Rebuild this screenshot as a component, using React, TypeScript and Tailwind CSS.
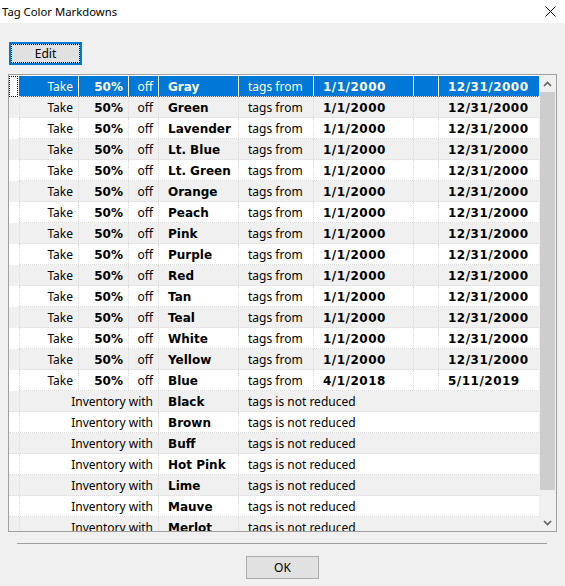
import React from "react";

type TakeRow = { color: string; from: string; to: string };

const takeRows: TakeRow[] = [
  { color: "Gray", from: "1/1/2000", to: "12/31/2000" },
  { color: "Green", from: "1/1/2000", to: "12/31/2000" },
  { color: "Lavender", from: "1/1/2000", to: "12/31/2000" },
  { color: "Lt. Blue", from: "1/1/2000", to: "12/31/2000" },
  { color: "Lt. Green", from: "1/1/2000", to: "12/31/2000" },
  { color: "Orange", from: "1/1/2000", to: "12/31/2000" },
  { color: "Peach", from: "1/1/2000", to: "12/31/2000" },
  { color: "Pink", from: "1/1/2000", to: "12/31/2000" },
  { color: "Purple", from: "1/1/2000", to: "12/31/2000" },
  { color: "Red", from: "1/1/2000", to: "12/31/2000" },
  { color: "Tan", from: "1/1/2000", to: "12/31/2000" },
  { color: "Teal", from: "1/1/2000", to: "12/31/2000" },
  { color: "White", from: "1/1/2000", to: "12/31/2000" },
  { color: "Yellow", from: "1/1/2000", to: "12/31/2000" },
  { color: "Blue", from: "4/1/2018", to: "5/11/2019" },
];

const untouched = ["Black", "Brown", "Buff", "Hot Pink", "Lime", "Mauve", "Merlot"];

const bold = "font-['DejaVu_Sans',sans-serif] font-bold text-[12px]";
const boldDate = "font-['DejaVu_Sans',sans-serif] font-bold text-[12px] tracking-[0.5px]";

function Take({ row, index }: { row: TakeRow; index: number }) {
  const selected = index === 0;
  const bg = selected ? "bg-[#0078d7] text-white" : index % 2 ? "bg-[#f0f0f0]" : "bg-white";
  const line = selected ? "border-l border-solid border-white" : "border-l border-dotted border-[#dcdcdc]";
  return (
    <div className={`flex h-[21px] shrink-0 ${index % 2 ? "bg-[#f0f0f0]" : "bg-white"}`}>
      <div className="w-[10px] shrink-0">
        {selected && <div className="h-[21px] w-[9px] border border-dotted border-black" />}
      </div>
      <div className={`flex flex-1 border-b border-dotted border-[#dcdcdc] leading-[22px] ${bg}`}>
        <div className={`w-[59px] shrink-0 pr-[5px] text-right ${selected ? "" : "border-l border-dotted border-[#dcdcdc]"}`}>Take</div>
        <div className={`w-[50px] shrink-0 pr-[5px] text-right ${line} ${bold}`}>50%</div>
        <div className={`w-[30px] shrink-0 pr-[5px] text-right ${line}`}>off</div>
        <div className={`w-[80px] shrink-0 pl-[9px] ${line} ${bold}`}>{row.color}</div>
        <div className={`w-[75px] shrink-0 pl-[9px] ${line}`}>tags from</div>
        <div className={`w-[100px] shrink-0 pl-[9px] ${line} ${boldDate}`}>{row.from}</div>
        <div className={`w-[25px] shrink-0 ${line}`} />
        <div className={`flex-1 pl-[9px] ${line} ${boldDate}`}>{row.to}</div>
      </div>
    </div>
  );
}

function Untouched({ color, index }: { color: string; index: number }) {
  const bg = index % 2 ? "bg-[#f0f0f0]" : "bg-white";
  const line = "border-l border-dotted border-[#dcdcdc]";
  return (
    <div className={`flex h-[21px] shrink-0 border-b border-dotted border-[#dcdcdc] leading-[22px] ${bg}`}>
      <div className="w-[10px] shrink-0" />
      <div className={`w-[139px] shrink-0 pr-[5px] text-right ${line}`}>Inventory with</div>
      <div className={`w-[80px] shrink-0 pl-[9px] ${line} ${bold}`}>{color}</div>
      <div className={`flex-1 pl-[9px] ${line}`}>tags is not reduced</div>
    </div>
  );
}

function ScrollBar() {
  return (
    <div className="flex w-[17px] shrink-0 flex-col bg-[#f0f0f0]">
      <div className="flex h-[17px] items-center justify-center">
        <svg width="9" height="6" viewBox="0 0 9 6">
          <path d="M1 5 L4.5 1.5 L8 5" fill="none" stroke="#606060" strokeWidth="1.6" />
        </svg>
      </div>
      <div className="mx-[1px] h-[398px] bg-[#cdcdcd]" />
      <div className="flex-1" />
      <div className="flex h-[17px] items-center justify-center">
        <svg width="9" height="6" viewBox="0 0 9 6">
          <path d="M1 1 L4.5 4.5 L8 1" fill="none" stroke="#606060" strokeWidth="1.6" />
        </svg>
      </div>
    </div>
  );
}

export default function App() {
  return (
    <div className="flex h-[586px] w-[565px] flex-col bg-[#f0f0f0] font-['Noto_Sans',sans-serif] text-[12px] leading-[20px] text-black">
      <div className="flex h-[23px] shrink-0 items-center justify-between bg-white pl-[2px] pr-[9px]">
        <span className="text-[11.3px]">Tag Color Markdowns</span>
        <svg width="11" height="11" viewBox="0 0 11 11">
          <path d="M0.5 0.5 L10.5 10.5 M10.5 0.5 L0.5 10.5" stroke="#000" strokeWidth="1" />
        </svg>
      </div>

      <div className="ml-[9px] mt-[19px] flex h-[23px] w-[73px] items-center justify-center border-2 border-[#0078d7] bg-[#e1e1e1]">
        <div className="flex h-full w-full items-center justify-center border border-dotted border-black">Edit</div>
      </div>

      <div className="ml-[8px] mt-[9px] flex h-[458px] w-[549px] border border-[#a0a0a0] bg-white">
        <div className="flex flex-1 flex-col overflow-hidden pt-[1px]">
          {takeRows.map((row, i) => (
            <Take key={row.color} row={row} index={i} />
          ))}
          {untouched.map((color, i) => (
            <Untouched key={color} color={color} index={i + takeRows.length} />
          ))}
        </div>
        <ScrollBar />
      </div>

      <div className="ml-[17px] mt-[11px] h-[1px] w-[530px] bg-[#a0a0a0]" />

      <div className="mt-[12px] flex justify-center">
        <button
          type="button"
          className="flex h-[23px] w-[73px] items-center justify-center border border-[#adadad] bg-[#e1e1e1] text-[12px]"
        >
          OK
        </button>
      </div>
    </div>
  );
}
